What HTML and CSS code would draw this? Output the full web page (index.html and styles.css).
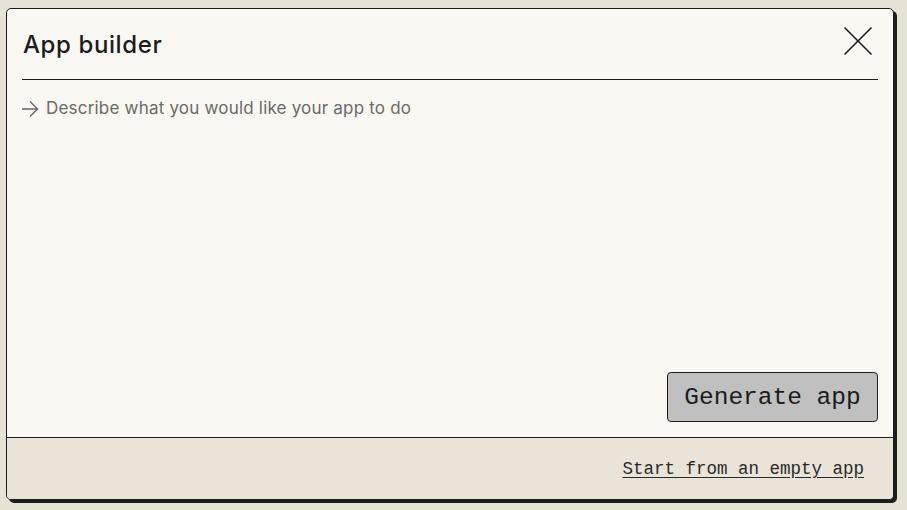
FILE: index.html
```html
<!DOCTYPE html>
<html>
<head>
  <title>App builder</title>
  <link rel="stylesheet" href="styles.css">
</head>
<body>
  <div class="dialog">
    <div class="dialog-main">
      <div class="dialog-header">
        <h2 class="dialog-title">App builder</h2>
        <button class="close-btn" aria-label="Close">
          <svg width="30" height="30" viewBox="0 0 30 30">
            <line x1="1.5" y1="1.5" x2="28.5" y2="28.5" stroke="#1c1c1c" stroke-width="1.6"/>
            <line x1="28.5" y1="1.5" x2="1.5" y2="28.5" stroke="#1c1c1c" stroke-width="1.6"/>
          </svg>
        </button>
      </div>
      <div class="prompt-row">
        <svg class="prompt-arrow" width="18" height="18" viewBox="0 0 18 18">
          <line x1="1" y1="9" x2="16.5" y2="9" stroke="#666" stroke-width="1.4"/>
          <polyline points="9,1.5 16.5,9 9,16.5" fill="none" stroke="#666" stroke-width="1.4"/>
        </svg>
        <span class="prompt-text">Describe what you would like your app to do</span>
      </div>
      <div class="actions">
        <button class="generate-btn">Generate app</button>
      </div>
    </div>
    <div class="dialog-footer">
      <a class="empty-link" href="#">Start from an empty app</a>
    </div>
  </div>
</body>
</html>
```

FILE: styles.css
```css
html, body {
  margin: 0;
  height: 100%;
}

body {
  background: #e6e2d6;
  padding: 8px 0 0 6px;
  box-sizing: border-box;
  font-family: 'Inter', 'Noto Sans', sans-serif;
}

.dialog {
  width: 888px;
  height: 492px;
  box-sizing: border-box;
  background: #f9f8f3;
  border: 1px solid #1c1c1c;
  border-radius: 5px;
  box-shadow: 3px 3px 0 #1c1c1c;
  display: flex;
  flex-direction: column;
  overflow: hidden;
}

.dialog-main {
  flex: 1;
  display: flex;
  flex-direction: column;
  padding: 0 15px 15px 15px;
}

.dialog-header {
  height: 70px;
  border-bottom: 1px solid #1c1c1c;
  display: flex;
  align-items: center;
  justify-content: space-between;
}

.dialog-title {
  margin: 0 0 0 1px;
  font-size: 24px;
  font-weight: 500;
  color: #1c1c1c;
  letter-spacing: 0.6px;
}

.close-btn {
  background: none;
  border: none;
  padding: 0;
  margin-right: 5px;
  margin-top: -6px;
  display: flex;
}

.prompt-row {
  display: flex;
  align-items: center;
  gap: 7px;
  margin-top: 17px;
}

.prompt-arrow {
  margin-top: 3px;
  margin-left: -1px;
}

.prompt-text {
  font-size: 17px;
  color: #6a6a66;
  letter-spacing: 0.2px;
}

.actions {
  margin-top: auto;
  display: flex;
  justify-content: flex-end;
}

.generate-btn {
  width: 211px;
  height: 50px;
  background: #c0c0c0;
  border: 1px solid #1c1c1c;
  border-radius: 4px;
  font-family: 'Liberation Mono', 'DejaVu Sans Mono', monospace;
  font-size: 24.5px;
  color: #1c1c1c;
  padding: 0;
}

.dialog-footer {
  height: 61px;
  border-top: 1px solid #1c1c1c;
  background: #e9e3d8;
  display: flex;
  align-items: center;
  justify-content: flex-end;
  padding-right: 29px;
}

.empty-link {
  font-family: 'Liberation Mono', 'DejaVu Sans Mono', monospace;
  font-size: 17.5px;
  color: #2a2a2a;
  text-decoration: underline;
  text-underline-offset: 3px;
}
```
